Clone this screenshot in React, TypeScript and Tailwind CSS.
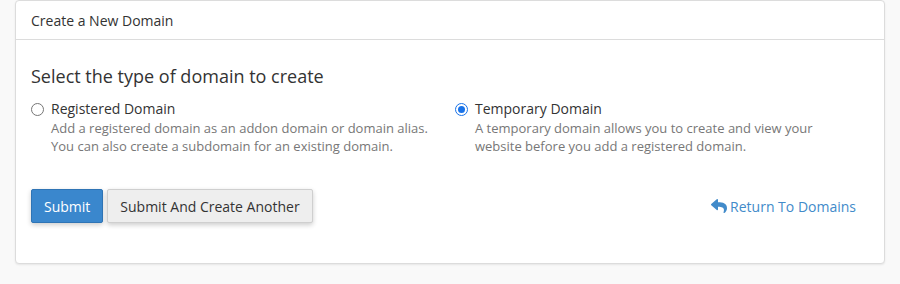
import { ReactNode } from "react";

function ReplyIcon() {
  return (
    <svg width="16" height="14" viewBox="0 0 512 448" className="fill-current">
      <path d="M8.3 161.4 184.3 9.4C199.7-3.9 224 6.9 224 27.6v80.1c160.6 1.8 288 34 288 186.3 0 61.4-39.6 122.3-83.3 154.1-13.7 9.9-33.1-2.5-28.1-18.6 45.3-144.7-21.4-183.1-176.6-185.4V332c0 20.7-24.3 31.5-39.7 18.2l-176-152c-11.1-9.6-11.1-26.8 0-36.8z" />
    </svg>
  );
}

function Option({
  checked,
  label,
  children,
}: {
  checked?: boolean;
  label: string;
  children: ReactNode;
}) {
  return (
    <div className="flex gap-[7px]">
      <span
        className={
          "mt-[4px] w-[13px] h-[13px] rounded-full border flex items-center justify-center shrink-0 bg-white " +
          (checked ? "border-[#1a73e8]" : "border-[#767676]")
        }
      >
        {checked && <span className="w-[7px] h-[7px] rounded-full bg-[#1a73e8]" />}
      </span>
      <div className="flex flex-col">
        <span className="text-[14px] leading-[20px] text-[#333]">{label}</span>
        <span className="text-[13px] leading-[18px] text-[#777]">{children}</span>
      </div>
    </div>
  );
}

export default function App() {
  return (
    <div
      className="bg-[#f9f9f9] w-[900px] h-[284px] px-[15px]"
      style={{ fontFamily: '"Open Sans", sans-serif' }}
    >
      <div className="bg-white border border-[#dcdcdc] rounded-[4px] shadow-[0_1px_2px_rgba(0,0,0,0.08)]">
        <div className="h-[39px] border-b border-[#dcdcdc] px-[15px] flex items-center pt-[1px] text-[14px] text-[#333]">
          Create a New Domain
        </div>
        <div className="px-[15px] pt-[24px] pb-[40px]">
          <h2 className="text-[18px] leading-[24px] text-[#333] mb-[11px]">
            Select the type of domain to create
          </h2>
          <div className="grid grid-cols-[424px_1fr]">
            <Option label="Registered Domain">
              Add a registered domain as an addon domain or domain alias.
              <br />
              You can also create a subdomain for an existing domain.
            </Option>
            <Option checked label="Temporary Domain">
              A temporary domain allows you to create and view your
              <br />
              website before you add a registered domain.
            </Option>
          </div>
          <div className="mt-[34px] flex items-center">
            <button className="h-[34px] px-[12px] bg-[#3a87cd] border border-[#2f74b5] rounded-[2px] text-white text-[14px] shadow-[0_2px_5px_rgba(0,0,0,0.2)]">
              Submit
            </button>
            <button className="ml-[4px] h-[34px] px-[12px] bg-[#eeeeee] border border-[#cfcfcf] rounded-[2px] text-[#333] text-[14px] shadow-[0_2px_5px_rgba(0,0,0,0.2)]">
              Submit And Create Another
            </button>
            <a className="ml-auto mr-[13px] flex items-center gap-[3px] text-[14px] text-[#428bca]">
              <ReplyIcon />
              Return To Domains
            </a>
          </div>
        </div>
      </div>
    </div>
  );
}
